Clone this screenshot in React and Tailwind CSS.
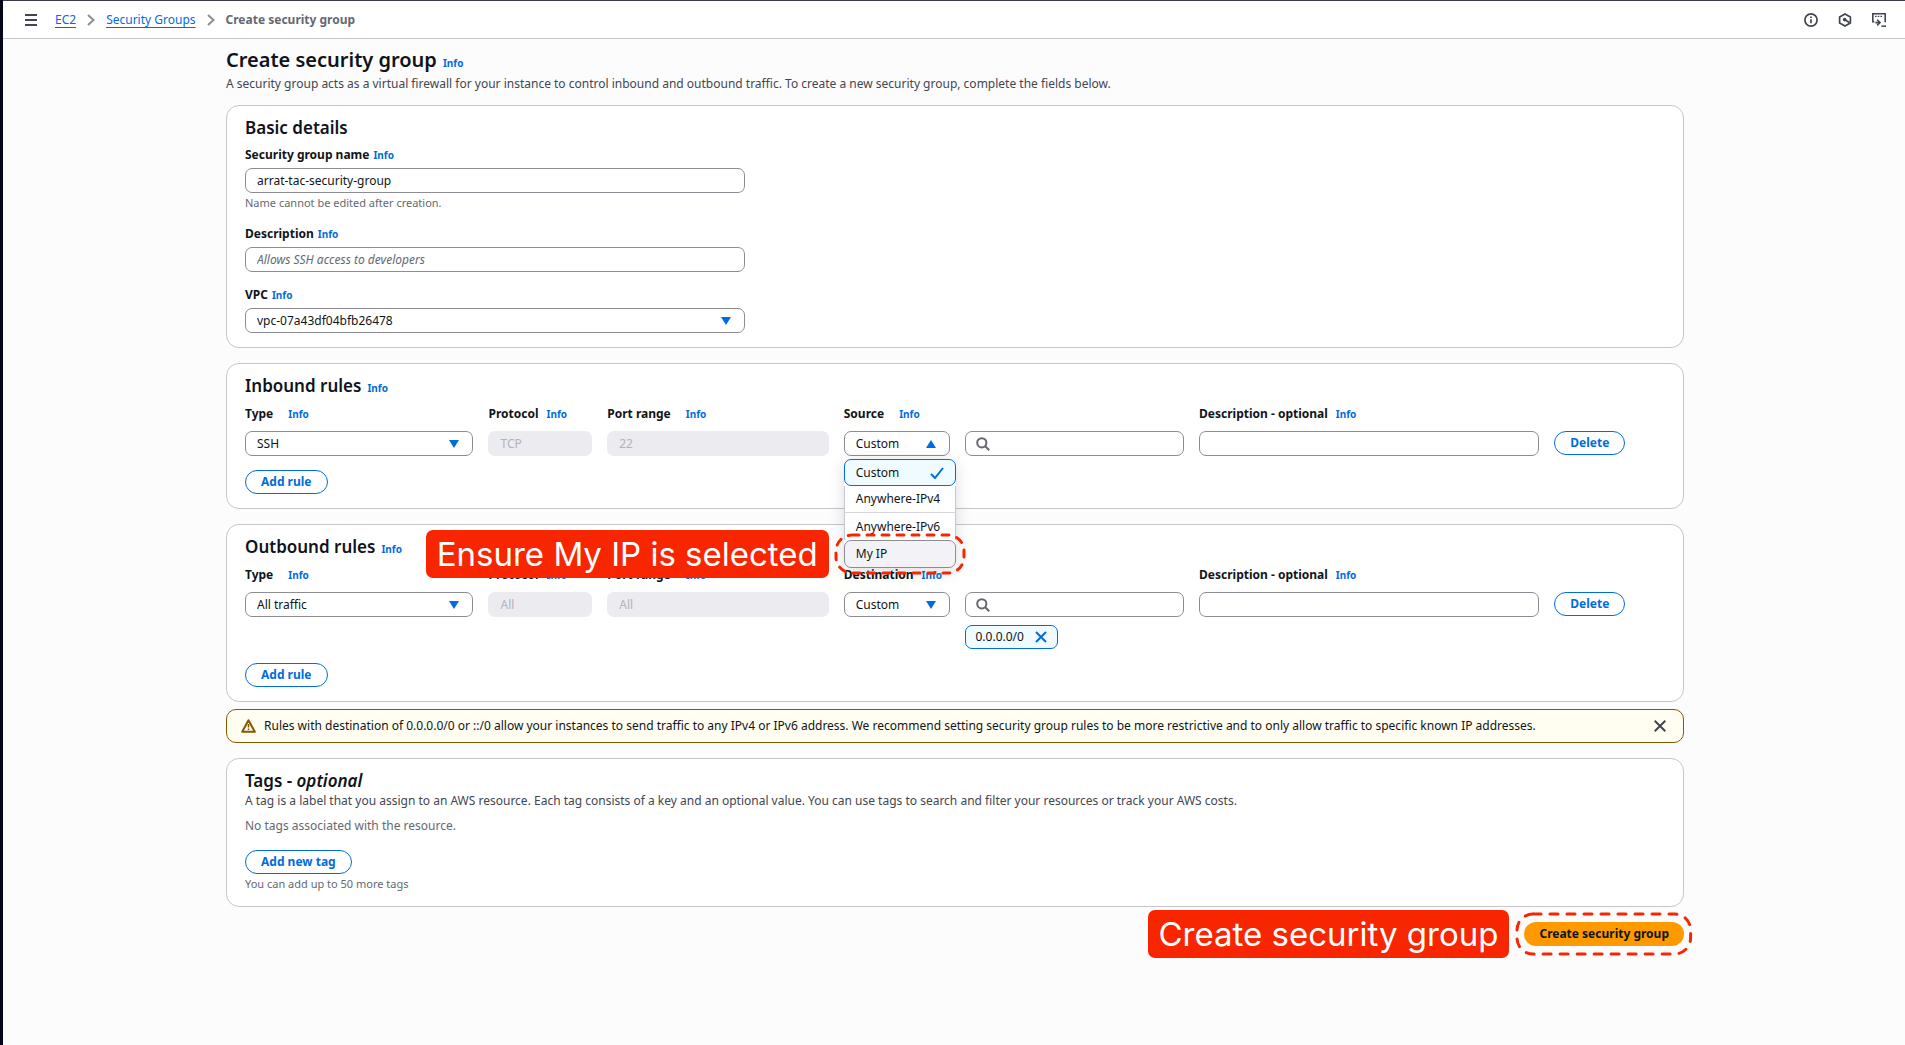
import React from "react";

const CONTROL =
  "block h-[25px] w-full min-w-0 rounded-[7px] border border-[#8c8c94] bg-white text-xs text-[#0f141a] outline-none";

function Info() {
  return (
    <a href="#info" className="text-[10px] leading-3 font-bold text-[#006ce0]">
      Info
    </a>
  );
}

function Card({ children }) {
  return (
    <section className="rounded-[13px] border border-[#c6c6cd] bg-white px-[18px] pt-[10px] pb-[14px]">
      {children}
    </section>
  );
}

function Heading({ children, info }) {
  return (
    <div className="flex items-baseline gap-1.5">
      <h2 className="text-[17px] leading-6 font-semibold text-[#0f141a]">{children}</h2>
      {info && <Info />}
    </div>
  );
}

function PillButton({ children }) {
  return (
    <button
      type="button"
      className="flex h-6 items-center rounded-full border border-[#006ce0] bg-white px-[15px] text-xs font-bold whitespace-nowrap text-[#006ce0]"
    >
      {children}
    </button>
  );
}

function Triangle({ up }) {
  return (
    <svg
      viewBox="0 0 10 8"
      className="pointer-events-none absolute top-1/2 right-[14px] h-2 w-[10px] -translate-y-1/2 fill-[#006ce0]"
      aria-hidden="true"
    >
      <path d={up ? "M5 0 10 8H0z" : "M0 0h10L5 8z"} />
    </svg>
  );
}

function Select({ id, options, open }) {
  return (
    <div className="relative">
      <select id={id} className={`${CONTROL} appearance-none pr-6 pl-[11px]`}>
        {options.map((o) => (
          <option key={o}>{o}</option>
        ))}
      </select>
      <Triangle up={open} />
    </div>
  );
}

function DisabledInput({ id, value }) {
  return (
    <input
      id={id}
      disabled
      value={value}
      readOnly
      className="block h-[25px] w-full min-w-0 rounded-[7px] bg-[#ebebf0] px-3 text-xs text-[#b4b4bb]"
    />
  );
}

function SearchInput({ label }) {
  return (
    <div className="relative">
      <svg
        viewBox="0 0 14 14"
        className="pointer-events-none absolute top-1/2 left-[11px] size-[14px] -translate-y-1/2 fill-none stroke-[#656871] stroke-2"
        aria-hidden="true"
      >
        <circle cx="5.8" cy="5.8" r="4.6" />
        <path d="m9.2 9.2 4 4" />
      </svg>
      <input type="search" aria-label={label} className={`${CONTROL} pr-2 pl-8`} />
    </div>
  );
}

function FieldLabel({ htmlFor, children, wide }) {
  return (
    <div className={`flex items-baseline ${wide ? "gap-[15px]" : "gap-2"}`}>
      <label htmlFor={htmlFor} className="text-xs leading-4 font-bold whitespace-nowrap text-[#0f141a]">
        {children}
      </label>
      <Info />
    </div>
  );
}

function DetailField({ id, label, hint, children }) {
  return (
    <div className="w-[35.2%]">
      <div className="mb-[5px] flex items-baseline gap-1">
        <label htmlFor={id} className="text-xs leading-4 font-bold text-[#0f141a]">
          {label}
        </label>
        <Info />
      </div>
      {children}
      {hint && <p className="mt-0.5 text-[11px] leading-4 text-[#656871]">{hint}</p>}
    </div>
  );
}

function DashedRing({ className, dash }) {
  return (
    <div className={`pointer-events-none absolute ${className}`}>
      <svg className="size-full overflow-visible" aria-hidden="true">
        <rect
          x="0"
          y="0"
          width="100%"
          height="100%"
          rx="16"
          fill="none"
          stroke="#f72600"
          strokeWidth="3"
          strokeLinecap="round"
          strokeDasharray={dash}
        />
      </svg>
    </div>
  );
}

function Callout({ children, className }) {
  return (
    <div
      className={`flex h-12 items-center rounded-[7px] bg-[#f72600] px-[11px] font-['Inter',sans-serif] text-[33px] leading-none whitespace-nowrap text-white ${className}`}
    >
      {children}
    </div>
  );
}

function SourceMenu() {
  return (
    <ul
      role="listbox"
      aria-label="Source options"
      className="absolute top-full left-0 z-10 mt-[3px] w-28 rounded-[7px] bg-white text-xs text-[#0f141a] shadow-[0_3px_16px_rgba(0,7,22,0.14)]"
    >
      <li
        role="option"
        aria-selected="true"
        className="flex h-[27px] items-center justify-between rounded-[7px] border border-[#006ce0] bg-[#f0fbff] px-[11px]"
      >
        Custom
        <svg viewBox="0 0 14 12" className="h-3 w-[14px] fill-none stroke-[#006ce0] stroke-2" aria-hidden="true">
          <path d="m1 7 4 4 8-10" />
        </svg>
      </li>
      <li
        role="option"
        aria-selected="false"
        className="flex h-[27px] items-center border-x border-b border-x-[#c6c6cd] border-b-[#d5d5db] px-[11px]"
      >
        Anywhere-IPv4
      </li>
      <li
        role="option"
        aria-selected="false"
        className="flex h-[27px] items-center border-x border-[#c6c6cd] px-[11px]"
      >
        Anywhere-IPv6
      </li>
      <li
        role="option"
        aria-selected="false"
        className="relative flex h-7 items-center rounded-[7px] border border-[#8c8c94] bg-[#f3f3f7] px-[11px]"
      >
        My IP
        <DashedRing className="-inset-x-[9px] -inset-y-[6px]" dash="7 8" />
        <Callout className="absolute top-1/2 right-full mr-4 -translate-y-1/2">Ensure My IP is selected</Callout>
      </li>
    </ul>
  );
}

function RuleSection({ id, title, peer, peerWide, type, protocol, port, open, chip }) {
  return (
    <Card>
      <Heading info>{title}</Heading>
      <div className="mt-2 grid grid-cols-[229fr_104fr_222fr_106fr_220fr_341fr_111fr] items-start gap-x-[15px] gap-y-[9px]">
        <FieldLabel htmlFor={`${id}-type`} wide>
          Type
        </FieldLabel>
        <FieldLabel htmlFor={`${id}-protocol`}>Protocol</FieldLabel>
        <FieldLabel htmlFor={`${id}-port`} wide>
          Port range
        </FieldLabel>
        <FieldLabel htmlFor={`${id}-peer`} wide={peerWide}>
          {peer}
        </FieldLabel>
        <span />
        <FieldLabel htmlFor={`${id}-desc`}>Description - optional</FieldLabel>
        <span />

        <Select id={`${id}-type`} options={[type]} />
        <DisabledInput id={`${id}-protocol`} value={protocol} />
        <DisabledInput id={`${id}-port`} value={port} />
        <div className="relative">
          <Select
            id={`${id}-peer`}
            options={["Custom", "Anywhere-IPv4", "Anywhere-IPv6", "My IP"]}
            open={open}
          />
          {open && <SourceMenu />}
        </div>
        <div className="flex flex-col gap-2">
          <SearchInput label={`${peer} search`} />
          {chip && (
            <div className="flex h-6 items-center gap-[11px] self-start rounded-[7px] border border-[#006ce0] bg-[#f0fbff] px-[10px] text-xs text-[#0f141a]">
              {chip}
              <button type="button" aria-label={`Remove ${chip}`}>
                <svg viewBox="0 0 12 12" className="size-3 stroke-[#006ce0] stroke-2" aria-hidden="true">
                  <path d="m1 1 10 10M11 1 1 11" />
                </svg>
              </button>
            </div>
          )}
        </div>
        <input id={`${id}-desc`} type="text" className={`${CONTROL} px-[11px]`} />
        <div className="flex">
          <PillButton>Delete</PillButton>
        </div>
      </div>
      <div className="mt-[14px] flex">
        <PillButton>Add rule</PillButton>
      </div>
    </Card>
  );
}

function Chevron() {
  return (
    <svg viewBox="0 0 8 12" className="h-3 w-2 fill-none stroke-[#8c8c94] stroke-2" aria-hidden="true">
      <path d="m1 1 5.5 5L1 11" />
    </svg>
  );
}

function TopBar() {
  return (
    <header className="flex h-[39px] items-center border-t border-b border-t-[#3b3b4d] border-b-[#c6c6cd] bg-white pr-[19px] pl-[22px]">
      <button type="button" aria-label="Open navigation" className="mr-[18px]">
        <svg viewBox="0 0 12 12" className="size-3 stroke-[#424650] stroke-2" aria-hidden="true">
          <path d="M0 1h12M0 6h12M0 11h12" />
        </svg>
      </button>
      <nav aria-label="Breadcrumbs" className="flex items-center gap-[11px] text-xs leading-4">
        <a href="#ec2" className="text-[#006ce0] underline underline-offset-3">
          EC2
        </a>
        <Chevron />
        <a href="#groups" className="text-[#006ce0] underline underline-offset-3">
          Security Groups
        </a>
        <Chevron />
        <span className="font-bold text-[#656871]">Create security group</span>
      </nav>
      <div className="ml-auto flex items-center gap-5">
        <button type="button" aria-label="Info">
          <svg viewBox="0 0 14 14" className="size-[14px] fill-none stroke-[#424650]" aria-hidden="true">
            <circle cx="7" cy="7" r="6.1" strokeWidth="1.7" />
            <path d="M7 6.2v4M7 3.4v1.5" strokeWidth="1.7" />
          </svg>
        </button>
        <button type="button" aria-label="Service shortcuts">
          <svg viewBox="0 0 14 14" className="size-[14px] fill-none stroke-[#424650]" aria-hidden="true">
            <path d="M7 .9 12.4 4v6L7 13.1 1.6 10V4z" strokeWidth="1.7" strokeLinejoin="round" />
            <circle cx="6.6" cy="6.6" r="1.8" className="fill-[#424650]" stroke="none" />
            <path d="m6.8 6.8 4.6 2.8" strokeWidth="1.8" />
          </svg>
        </button>
        <button type="button" aria-label="CloudShell">
          <svg viewBox="0 0 14 14" className="size-[14px] fill-none stroke-[#424650]" aria-hidden="true">
            <path d="M2.4 8.8H.8V.8h12.4v8.4" strokeWidth="1.6" />
            <path d="M3 3.4h1.6M5.7 3.4h1.6M8.4 3.4H10" strokeWidth="1.4" />
            <path d="M3.4 9.6h4.4M5.2 6.8 8 9.6l-2.8 2.8" strokeWidth="1.6" />
            <path d="M9.4 13.2H14" strokeWidth="1.5" />
          </svg>
        </button>
      </div>
    </header>
  );
}

export default function App() {
  return (
    <div className="min-h-screen border-l-[3px] border-[#06061a] bg-[#fcfcfd] font-['Noto_Sans',sans-serif] text-[#0f141a]">
      <TopBar />
      <div className="pl-0.5">
        <main className="mx-auto max-w-[1458px] pt-[9px] pb-8">
          <div className="flex items-baseline gap-1.5">
            <h1 className="text-xl leading-6 font-semibold">Create security group</h1>
            <Info />
          </div>
          <p className="mt-1 text-xs leading-4 text-[#424650]">
            A security group acts as a virtual firewall for your instance to control inbound and outbound traffic. To
            create a new security group, complete the fields below.
          </p>

          <div className="mt-[13px] flex flex-col gap-[15px]">
            <Card>
              <Heading>Basic details</Heading>
              <div className="mt-[7px] flex flex-col gap-[15px]">
                <DetailField id="name" label="Security group name" hint="Name cannot be edited after creation.">
                  <input
                    id="name"
                    type="text"
                    defaultValue="arrat-tac-security-group"
                    className={`${CONTROL} px-[11px]`}
                  />
                </DetailField>
                <DetailField id="description" label="Description">
                  <input
                    id="description"
                    type="text"
                    placeholder="Allows SSH access to developers"
                    className={`${CONTROL} px-[11px] placeholder:text-[#656871] placeholder:italic`}
                  />
                </DetailField>
                <DetailField id="vpc" label="VPC">
                  <Select id="vpc" options={["vpc-07a43df04bfb26478"]} />
                </DetailField>
              </div>
            </Card>

            <RuleSection
              id="inbound"
              title="Inbound rules"
              peer="Source"
              peerWide
              type="SSH"
              protocol="TCP"
              port="22"
              open
            />

            <div className="flex flex-col gap-[7px]">
              <RuleSection
                id="outbound"
                title="Outbound rules"
                peer="Destination"
                type="All traffic"
                protocol="All"
                port="All"
                chip="0.0.0.0/0"
              />
              <div
                role="alert"
                className="flex min-h-[34px] items-center gap-2 rounded-[10px] border border-[#855900] bg-[#fffef0] pr-[17px] pl-[14px] text-xs leading-4"
              >
                <svg
                  viewBox="0 0 15 14"
                  className="h-[14px] w-[15px] shrink-0 fill-none stroke-[#855900] stroke-2"
                  strokeLinejoin="round"
                  aria-hidden="true"
                >
                  <path d="M7.5 1.2 13.8 12.8H1.2z" />
                  <path d="M7.5 5v3.4M7.5 9.4V11" strokeWidth="1.6" />
                </svg>
                <p className="grow">
                  Rules with destination of 0.0.0.0/0 or ::/0 allow your instances to send traffic to any IPv4 or IPv6
                  address. We recommend setting security group rules to be more restrictive and to only allow traffic to
                  specific known IP addresses.
                </p>
                <button type="button" aria-label="Dismiss">
                  <svg viewBox="0 0 12 12" className="size-3 stroke-[#424650] stroke-2" aria-hidden="true">
                    <path d="m.7.7 10.6 10.6M11.3.7.7 11.3" />
                  </svg>
                </button>
              </div>
            </div>

            <Card>
              <Heading>
                Tags - <i>optional</i>
              </Heading>
              <p className="text-xs leading-4 text-[#424650]">
                A tag is a label that you assign to an AWS resource. Each tag consists of a key and an optional value.
                You can use tags to search and filter your resources or track your AWS costs.
              </p>
              <p className="mt-[9px] text-xs leading-4 text-[#656871]">No tags associated with the resource.</p>
              <div className="mt-4 flex">
                <PillButton>Add new tag</PillButton>
              </div>
              <p className="mt-0.5 text-[11px] leading-4 text-[#656871]">You can add up to 50 more tags</p>
            </Card>
          </div>

          <div className="mt-[3px] flex items-center justify-end gap-[15px]">
            <Callout className="">Create security group</Callout>
            <div className="relative">
              <button
                type="button"
                className="flex h-6 items-center rounded-full bg-[#ff9900] px-[15px] text-xs font-bold whitespace-nowrap text-[#0f141a]"
              >
                Create security group
              </button>
              <DashedRing className="-inset-x-[7px] -inset-y-[8px]" dash="8 9" />
            </div>
          </div>
        </main>
      </div>
    </div>
  );
}
